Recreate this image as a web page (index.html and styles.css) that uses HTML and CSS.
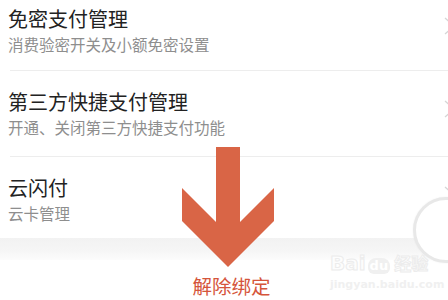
FILE: index.html
```html
<!DOCTYPE html>
<html lang="zh-CN">
<head>
<meta charset="utf-8">
<link rel="stylesheet" href="styles.css">
</head>
<body>
<div class="page">
  <div class="list">
    <div class="row first">
      <div class="title">免密支付管理</div>
      <div class="sub">消费验密开关及小额免密设置</div>
      <svg class="chev" width="14" height="20" viewBox="0 0 14 20"><path d="M2 2 L11 10 L2 18" fill="none" stroke="#d6d6d6" stroke-width="1.3"/></svg>
    </div>
    <div class="row">
      <div class="title">第三方快捷支付管理</div>
      <div class="sub">开通、关闭第三方快捷支付功能</div>
      <svg class="chev" width="14" height="20" viewBox="0 0 14 20"><path d="M2 2 L11 10 L2 18" fill="none" stroke="#d6d6d6" stroke-width="1.3"/></svg>
    </div>
    <div class="row last">
      <div class="title">云闪付</div>
      <div class="sub">云卡管理</div>
      <svg class="chev" width="14" height="20" viewBox="0 0 14 20"><path d="M2 2 L11 10 L2 18" fill="none" stroke="#d6d6d6" stroke-width="1.3"/></svg>
    </div>
  </div>
  <div class="band"></div>
  <div class="footer">解除绑定</div>

  <div class="circle"></div>
  <svg class="arrow" width="92" height="121" viewBox="182 147 92 121">
    <polygon points="216,147 240,147 240,222 274,188 274,221 228,267 182,221 182,188 216,222" fill="#d96546"/>
  </svg>
  <div class="mark">
    <div class="mark-top"><span class="bai">Bai</span><span class="paw">du</span><span class="jy">经验</span></div>
    <div class="mark-url">jingyan.baidu.com</div>
  </div>
</div>
</body>
</html>
```
FILE: styles.css
```css
html, body {
  margin: 0;
  padding: 0;
  background: #ffffff;
}
.page {
  position: relative;
  width: 448px;
  height: 300px;
  overflow: hidden;
  font-family: "Noto Sans CJK SC", "Noto Sans", sans-serif;
}
.list {
  margin-top: -12px;
}
.row {
  position: relative;
  padding: 18px 0 19px 8px;
  margin-left: 10px;
  border-bottom: 1px solid #ededed;
  display: flex;
  flex-direction: column;
  gap: 2px;
}
.row .title, .row .sub {
  margin-left: -10px;
}
.row.first {
  padding-bottom: 16px;
}
.row.last {
  border-bottom: none;
  padding-bottom: 15px;
}
.title {
  font-size: 20px;
  line-height: 26px;
  color: #222222;
}
.sub {
  font-size: 15.5px;
  line-height: 20px;
  color: #8e8e8e;
}
.chev {
  position: absolute;
  right: -9px;
  top: 28px;
}
.band {
  height: 22px;
  background: linear-gradient(#f2f2f2, #f6f6f6 60%, #fcfcfc);
}
.footer {
  margin-top: 13px;
  padding-left: 15px;
  text-align: center;
  font-size: 19.5px;
  line-height: 26px;
  color: #d5553b;
}
.circle {
  position: absolute;
  left: 413px;
  top: 197px;
  width: 60px;
  height: 60px;
  border-radius: 50%;
  border: 3px solid #e8e8e8;
  background: #ffffff;
  box-shadow: 0 0 2px rgba(0,0,0,0.06);
}
.arrow {
  position: absolute;
  left: 182px;
  top: 147px;
}
.mark {
  position: absolute;
  left: 330px;
  top: 252px;
  font-family: "DejaVu Sans", sans-serif;
}
.mark-top {
  display: flex;
  align-items: flex-end;
  gap: 2px;
  font-size: 20px;
  line-height: 22px;
  font-weight: bold;
  -webkit-text-stroke: 1px #ececec;
  color: #fdfdfd;
}
.paw {
  font-size: 13px;
  line-height: 16px;
  background: #f0f0f0;
  color: #ffffff;
  -webkit-text-stroke: 0;
  border-radius: 8px 8px 6px 6px;
  padding: 0 2px;
}
.jy {
  font-family: "Noto Sans CJK SC", sans-serif;
  font-size: 17px;
  margin-left: 2px;
}
.mark-url {
  font-size: 11px;
  line-height: 14px;
  margin-top: 4px;
  color: #f0f0f0;
  font-weight: bold;
}
```
